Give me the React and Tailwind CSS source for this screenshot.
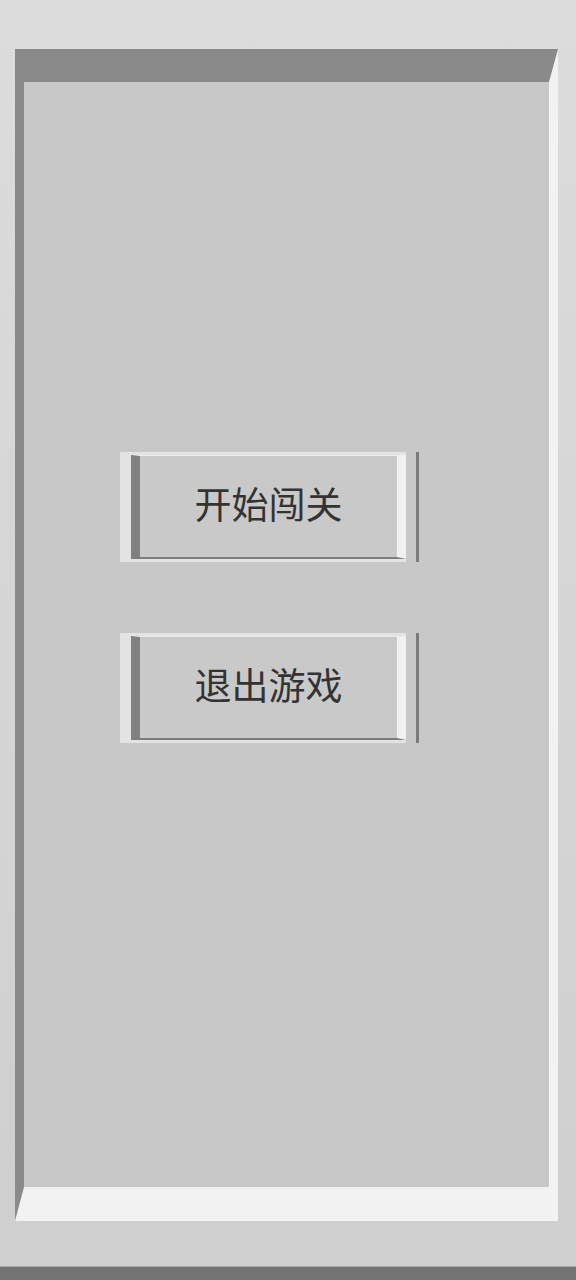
import React from "react";

const menuItems = ["开始闯关", "退出游戏"];

function MenuButton({ label }) {
  return (
    <div className="flex h-[110px] w-[299px]">
      <div className="flex border-l-[11px] border-y-[3px] border-[#e3e3e3] bg-[#e3e3e3]">
        <button className="flex h-[104px] w-[275px] items-center justify-center pb-[7px] border-l-[9px] border-r-[9px] border-t border-b-2 border-l-[#808080] border-r-[#f1f1f1] border-t-[#ececec] border-b-[#7d7d7d] bg-[#c9c9c9] text-[37px] leading-none text-[#333333] font-['Noto_Sans_CJK_SC',sans-serif]">
          {label}
        </button>
      </div>
      <div className="ml-auto w-[3px] bg-[#7b7b7b]" />
    </div>
  );
}

export default function App() {
  return (
    <div className="flex h-[1280px] w-[576px] flex-col bg-gradient-to-b from-[#dcdcdc] to-[#cfcfcf]">
      <div className="pt-[49px] pl-[15px] pr-[18px]">
        <div className="h-[1172px] border-t-[33px] border-b-[34px] border-l-[9px] border-r-[9px] border-t-[#898989] border-l-[#8a8a8a] border-r-[#f2f2f2] border-b-[#f2f2f2] bg-[#c8c8c8]">
          <div className="flex flex-col gap-[71px] pt-[370px] pl-[96px]">
            {menuItems.map((item) => (
              <MenuButton key={item} label={item} />
            ))}
          </div>
        </div>
      </div>
      <div className="flex-1" />
      <div className="h-[14px] border-t border-[#a9a9a9] bg-[#737373]" />
    </div>
  );
}
